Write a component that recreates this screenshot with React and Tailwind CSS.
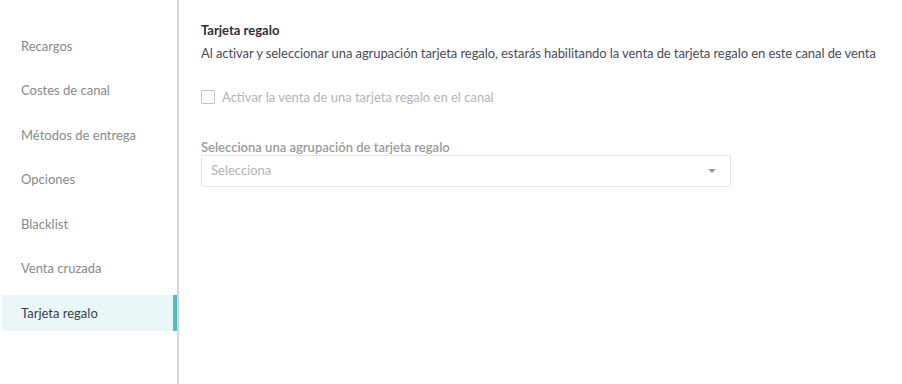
const items = ['Recargos', 'Costes de canal', 'Métodos de entrega', 'Opciones', 'Blacklist', 'Venta cruzada', 'Tarjeta regalo']

export default function App() {
    const active = 'Tarjeta regalo'
    return (
        <div className="flex h-[384px] w-[902px] bg-white text-[13px]" style={{ fontFamily: 'Lato, "Noto Sans", sans-serif' }}>
            <div className="w-[179px] shrink-0 border-r-2 border-[#d4d4d4] pt-[24px] pl-[2px]">
                {items.map(item => (
                    <div key={item}
                        className={item === active
                            ? 'h-[36px] my-[4.25px] flex items-center pl-[19px] bg-[#eaf7f9] border-r-[4px] border-[#4fbcc4] text-[#3d3d4e]'
                            : 'h-[44.5px] flex items-center pl-[19px] text-[#8a8a8a]'}>
                        {item}
                    </div>
                ))}
            </div>
            <div className="flex-1 pl-[22px] pt-[21px]">
                <h2 className="text-[13px] font-bold text-[#2f2f3a] leading-[18px]">Tarjeta regalo</h2>
                <p className="mt-[5px] text-[#4b4b5a] leading-[18px] tracking-[-0.08px]">Al activar y seleccionar una agrupación tarjeta regalo, estarás habilitando la venta de tarjeta regalo en este canal de venta</p>
                <label className="mt-[26px] flex items-center gap-[7px] text-[#b4b4b4] leading-[18px]">
                    <span className="w-[14px] h-[14px] border border-[#c4c4c4] rounded-[2px]"></span>
                    Activar la venta de una tarjeta regalo en el canal
                </label>
                <div className="mt-[34px] text-[#9b9b9b] font-semibold leading-[14px]">Selecciona una agrupación de tarjeta regalo</div>
                <div className="mt-[1px] w-[530px] h-[32px] border border-[#e4e4e4] rounded-[2px] flex items-center justify-between pl-[9px] pr-[14px] text-[#b4b4b4]">
                    <span>Selecciona</span>
                    <svg width="8" height="4" viewBox="0 0 8 4"><path d="M0 0h8L4 4z" fill="#999999" /></svg>
                </div>
            </div>
        </div>
    )
}
